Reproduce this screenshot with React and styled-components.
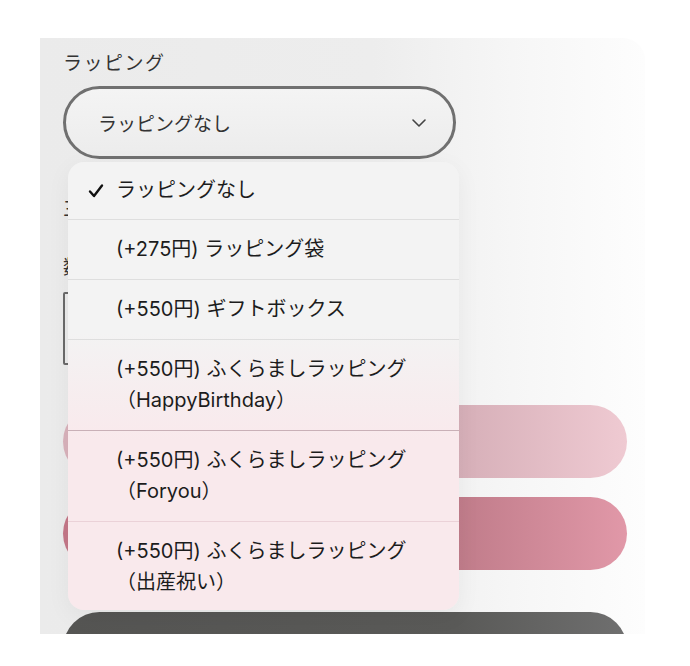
import React from "react";
import styled, { createGlobalStyle } from "styled-components";

const GlobalStyle = createGlobalStyle`
  body {
    margin: 0;
    background: #ffffff;
    font-family: "Inter", "Noto Sans CJK JP", sans-serif;
    color: #1c1c1c;
  }
`;

const Page = styled.div`
  padding: 38px 0 0 40px;
`;

const Sheet = styled.div`
  position: relative;
  width: 605px;
  height: 596px;
  overflow: hidden;
  border-top-right-radius: 22px;
  background: linear-gradient(
    90deg,
    #ebebeb 0%,
    #ededed 55%,
    #f6f6f6 78%,
    #fdfdfd 100%
  );
`;

const Form = styled.div`
  display: flex;
  flex-direction: column;
  align-items: flex-start;
  padding: 14px 18px 0 23px;
`;

const Label = styled.div`
  font-size: 19px;
  line-height: 24px;
  letter-spacing: 1.5px;
  color: #333333;
  margin-top: ${(props) => props.gap || 0}px;
`;

const Select = styled.div`
  box-sizing: border-box;
  width: 393px;
  height: 73px;
  margin-top: 10px;
  padding: 0 27px 0 32px;
  display: flex;
  align-items: center;
  justify-content: space-between;
  border: 3px solid #707070;
  border-radius: 40px;
  background: linear-gradient(180deg, #f4f4f4, #ececec);
  font-size: 19px;
  color: #333333;
`;

const QtyBox = styled.div`
  box-sizing: border-box;
  width: 160px;
  height: 73px;
  margin-top: 12px;
  border: 2px solid #6a6a6a;
  border-radius: 2px;
`;

const Actions = styled.div`
  display: flex;
  flex-direction: column;
  gap: 19px;
  margin-top: 40px;
`;

const tones = {
  light: "linear-gradient(90deg, #d9b2bb 0%, #d6afb8 70%, #efcad2 100%)",
  rose: "linear-gradient(90deg, #c47788 0%, #c07c8a 70%, #e198a8 100%)",
  dark: "linear-gradient(90deg, #555553 0%, #5a5a58 70%, #6f6f6f 100%)",
};

const PillButton = styled.div`
  box-sizing: border-box;
  width: 564px;
  height: 73px;
  margin-top: ${(props) => (props.tone === "dark" ? 23 : 0)}px;
  border-radius: 37px;
  display: flex;
  align-items: center;
  justify-content: center;
  background: ${(props) => tones[props.tone]};
  color: #ffffff;
  font-size: 19px;
  padding-top: ${(props) => (props.tone === "dark" ? 10 : 0)}px;
`;

const Menu = styled.div`
  position: absolute;
  top: 124px;
  left: 28px;
  width: 391px;
  border-radius: 16px;
  overflow: hidden;
  background: linear-gradient(
    180deg,
    #f3f3f3 0%,
    #f3f3f3 38%,
    #f9e9ec 62%,
    #f9e9ec 100%
  );
  box-shadow: 0 6px 24px rgba(0, 0, 0, 0.05);
`;

const Item = styled.div`
  position: relative;
  padding: ${(props) => (props.first ? "13px" : "14px")} 12px
    ${(props) => (props.first ? "13px" : props.last ? "11px" : "14px")} 48px;
  border-bottom: 1px solid ${(props) => props.line || "transparent"};
  font-size: 20px;
  line-height: 31px;
  color: #1c1c1c;
`;

const Line = styled.div`
  white-space: nowrap;
`;

const Check = styled.svg`
  position: absolute;
  left: 20px;
  top: 21px;
  width: 16px;
  height: 16px;
`;

const options = [
  { text: "ラッピングなし", checked: true, line: "#dedede" },
  { text: "(+275円) ラッピング袋", line: "#dedede" },
  { text: "(+550円) ギフトボックス", line: "#dedede" },
  {
    text: "(+550円) ふくらましラッピング",
    note: "（HappyBirthday）",
    line: "#c9b0b7",
  },
  {
    text: "(+550円) ふくらましラッピング",
    note: "（Foryou）",
    line: "#ebd2d8",
  },
  { text: "(+550円) ふくらましラッピング", note: "（出産祝い）" },
];

function Chevron() {
  return (
    <svg width="14" height="8" viewBox="0 0 14 8" fill="none">
      <path
        d="M1 1l6 6 6-6"
        stroke="#444"
        strokeWidth="1.6"
        strokeLinecap="round"
        strokeLinejoin="round"
      />
    </svg>
  );
}

export default function App() {
  return (
    <Page>
      <GlobalStyle />
      <Sheet>
        <Form>
          <Label>ラッピング</Label>
          <Select>
            <span>ラッピングなし</span>
            <Chevron />
          </Select>
          <Label gap={39}>三角巾の有無</Label>
          <Label gap={34}>数量</Label>
          <QtyBox />
          <Actions>
            <PillButton tone="light">お気に入りに追加</PillButton>
            <PillButton tone="rose">カートに入れる</PillButton>
            <PillButton tone="dark">購入手続きへ進む</PillButton>
          </Actions>
        </Form>
        <Menu>
          {options.map((o, i) => (
            <Item
              key={i}
              first={i === 0}
              last={i === options.length - 1}
              line={o.line}
            >
              {o.checked && (
                <Check viewBox="0 0 16 16">
                  <path
                    d="M2 8.5l4 4.5L14 2.5"
                    fill="none"
                    stroke="#111"
                    strokeWidth="2.4"
                    strokeLinecap="round"
                    strokeLinejoin="round"
                  />
                </Check>
              )}
              <Line>{o.text}</Line>
              {o.note && <Line>{o.note}</Line>}
            </Item>
          ))}
        </Menu>
      </Sheet>
    </Page>
  );
}
